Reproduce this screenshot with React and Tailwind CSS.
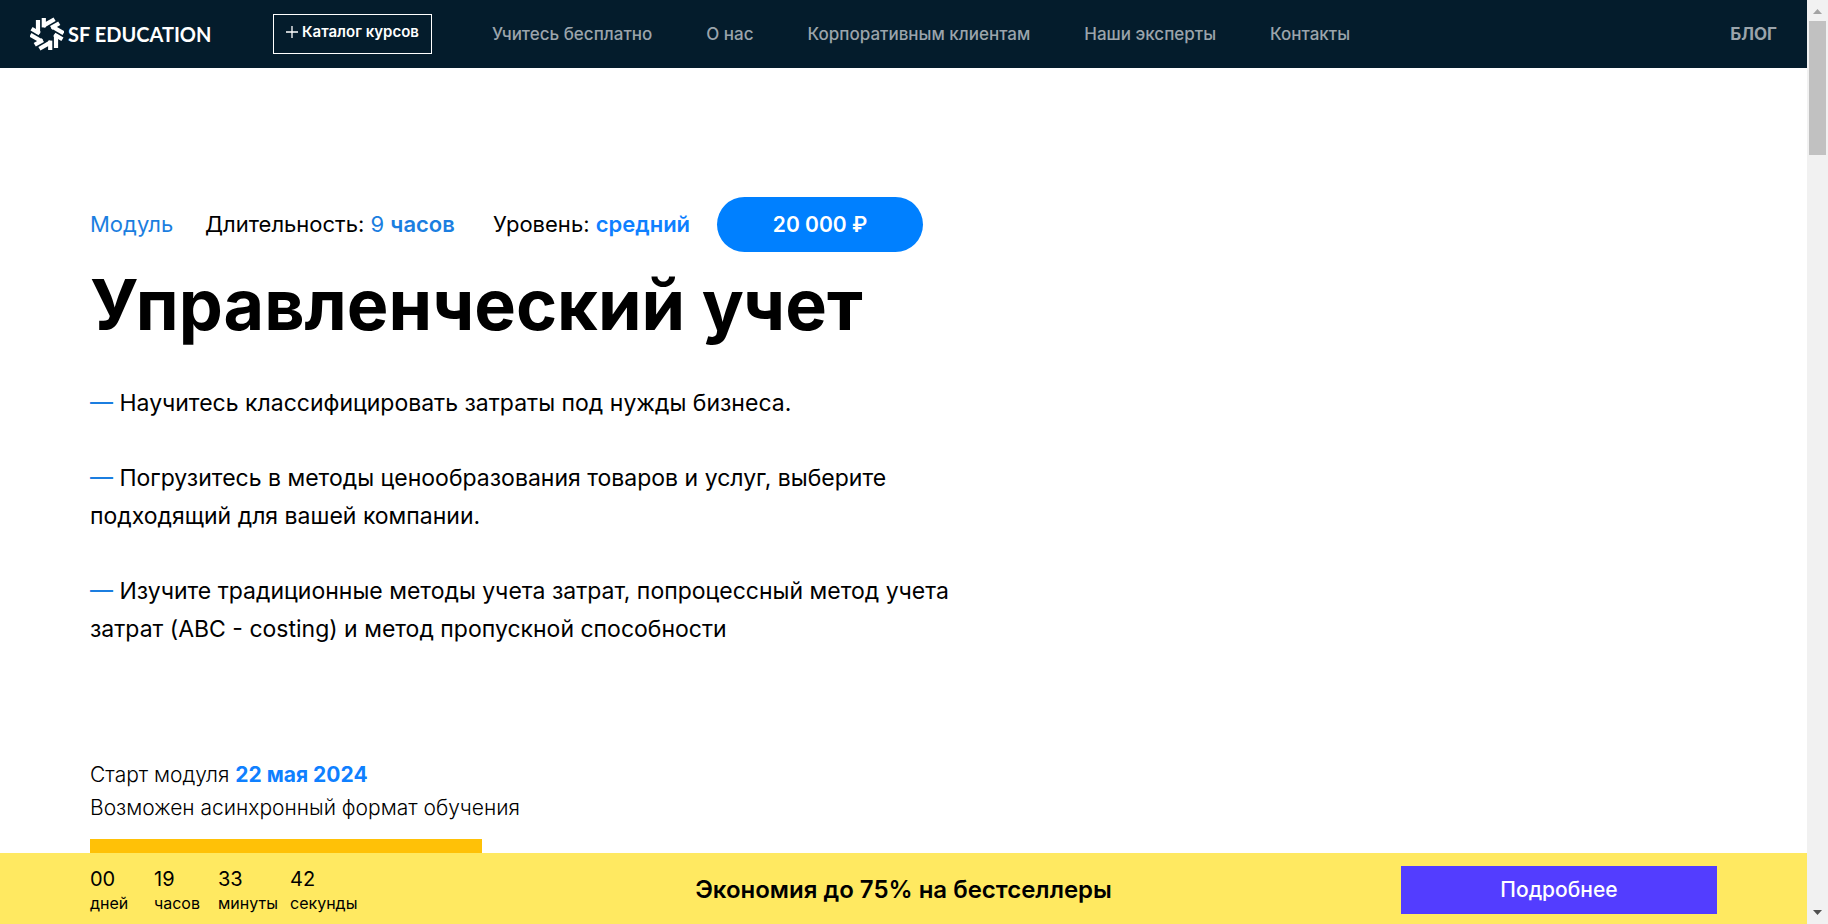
const NAV_LINKS = [
  'Учитесь бесплатно',
  'О нас',
  'Корпоративным клиентам',
  'Наши эксперты',
  'Контакты',
];

const COUNTDOWN = [
  { value: '00', unit: 'дней', width: 'w-16' },
  { value: '19', unit: 'часов', width: 'w-16' },
  { value: '33', unit: 'минуты', width: 'w-18' },
  { value: '42', unit: 'секунды', width: 'w-18' },
];

const BENEFITS = [
  'Научитесь классифицировать затраты под нужды бизнеса.',
  'Погрузитесь в методы ценообразования товаров и услуг, выберите подходящий для вашей компании.',
  'Изучите традиционные методы учета затрат, попроцессный метод учета затрат (ABC - costing) и метод пропускной способности',
];

function LogoMark() {
  return (
    <svg viewBox="-17 -17 34 34" className="size-[34px]" stroke="#fff" strokeWidth="4.2" aria-hidden="true">
      {[0, 60, 120, 180, 240, 300].map((angle) => (
        <g key={angle} transform={`rotate(${angle})`}>
          <path d="M-3.2 -16V-6.6" />
          <path d="M-4 -8.1L7.6 -14.8" />
        </g>
      ))}
    </svg>
  );
}

function Header() {
  return (
    <header className="flex h-[68px] shrink-0 items-center bg-[#041c2c] px-[30px]">
      <a href="#" className="flex w-[243px] shrink-0 items-center font-['Lato',sans-serif] text-xl font-bold text-white">
        <LogoMark />
        <span className="pl-1">SF EDUCATION</span>
      </a>
      <button
        type="button"
        className="flex h-10 w-[159px] shrink-0 items-center justify-center gap-1 border border-white pb-1 text-[15px] font-semibold text-white"
      >
        <svg viewBox="0 0 12 12" className="size-3" stroke="currentColor" strokeWidth="1.3" aria-hidden="true">
          <path d="M6 0V12M0 6H12" />
        </svg>
        Каталог курсов
      </button>
      <nav className="flex flex-1 items-center gap-[54px] pt-0.5 pl-[60px] text-[17px] font-medium whitespace-nowrap text-[#9ba4ab]">
        {NAV_LINKS.map((label) => (
          <a key={label} href="#">
            {label}
          </a>
        ))}
        <a href="#" className="ml-auto font-bold">
          БЛОГ
        </a>
      </nav>
    </header>
  );
}

function Course() {
  return (
    <main className="min-h-0 flex-1 overflow-hidden px-[90px] pt-[129px]">
      <div className="flex items-center text-[22px] whitespace-nowrap">
        <span className="w-[115px] text-[#1b7ee0]">Модуль</span>
        <span className="w-[288px]">
          Длительность: <span className="text-[#1b7ee0]">9 <b className="font-semibold">часов</b></span>
        </span>
        <span className="w-[224px]">
          Уровень: <b className="font-semibold text-[#0f80ff]">средний</b>
        </span>
        <button type="button" className="h-[55px] w-[206px] rounded-full bg-[#0080ff] text-[21px] font-semibold text-white">
          20 000 ₽
        </button>
      </div>
      <h1 className="mt-2 text-[70px] leading-[90px] font-bold">Управленческий учет</h1>
      <ul className="mt-[34px] max-w-[880px] space-y-[37px] text-[23px] leading-[38px]">
        {BENEFITS.map((text) => (
          <li key={text}>
            <span className="text-[#1b7ee0]">—</span> {text}
          </li>
        ))}
      </ul>
      <div className="mt-[110px] text-[21px] leading-[33px] font-light">
        <p>
          Старт модуля <b className="font-bold text-[#0f80ff]">22 мая 2024</b>
        </p>
        <p>Возможен асинхронный формат обучения</p>
      </div>
      <button type="button" aria-label="Записаться" className="mt-[15px] block h-[60px] w-[392px] bg-[#ffc107]" />
    </main>
  );
}

function PromoBar() {
  return (
    <footer className="grid h-[71px] shrink-0 grid-cols-3 items-center bg-[#ffe961] px-[90px] pt-0.5">
      <div className="flex pt-0.5">
        {COUNTDOWN.map(({ value, unit, width }) => (
          <div key={unit} className={width}>
            <div className="text-xl leading-6">{value}</div>
            <div className="text-base leading-6">{unit}</div>
          </div>
        ))}
      </div>
      <p className="text-center text-2xl font-semibold whitespace-nowrap">Экономия до 75% на бестселлеры</p>
      <button type="button" className="h-12 w-[316px] justify-self-end bg-[#533dff] text-[21px] font-medium text-white">
        Подробнее
      </button>
    </footer>
  );
}

function ScrollTrack() {
  return (
    <div className="flex w-[21px] shrink-0 flex-col items-center bg-[#f1f1f1]">
      <svg viewBox="0 0 21 21" className="size-[21px]" aria-hidden="true">
        <path d="M6 14L10.5 9L15 14Z" fill="#a3a3a3" />
      </svg>
      <div className="h-[134px] w-[17px] bg-[#c1c1c1]" />
      <svg viewBox="0 0 21 21" className="mt-auto size-[21px]" aria-hidden="true">
        <path d="M6 7L10.5 12L15 7Z" fill="#505050" />
      </svg>
    </div>
  );
}

export default function App() {
  return (
    <div className="flex h-screen bg-white font-['Inter',sans-serif] text-black">
      <div className="flex min-w-0 flex-1 flex-col">
        <Header />
        <Course />
        <PromoBar />
      </div>
      <ScrollTrack />
    </div>
  );
}
